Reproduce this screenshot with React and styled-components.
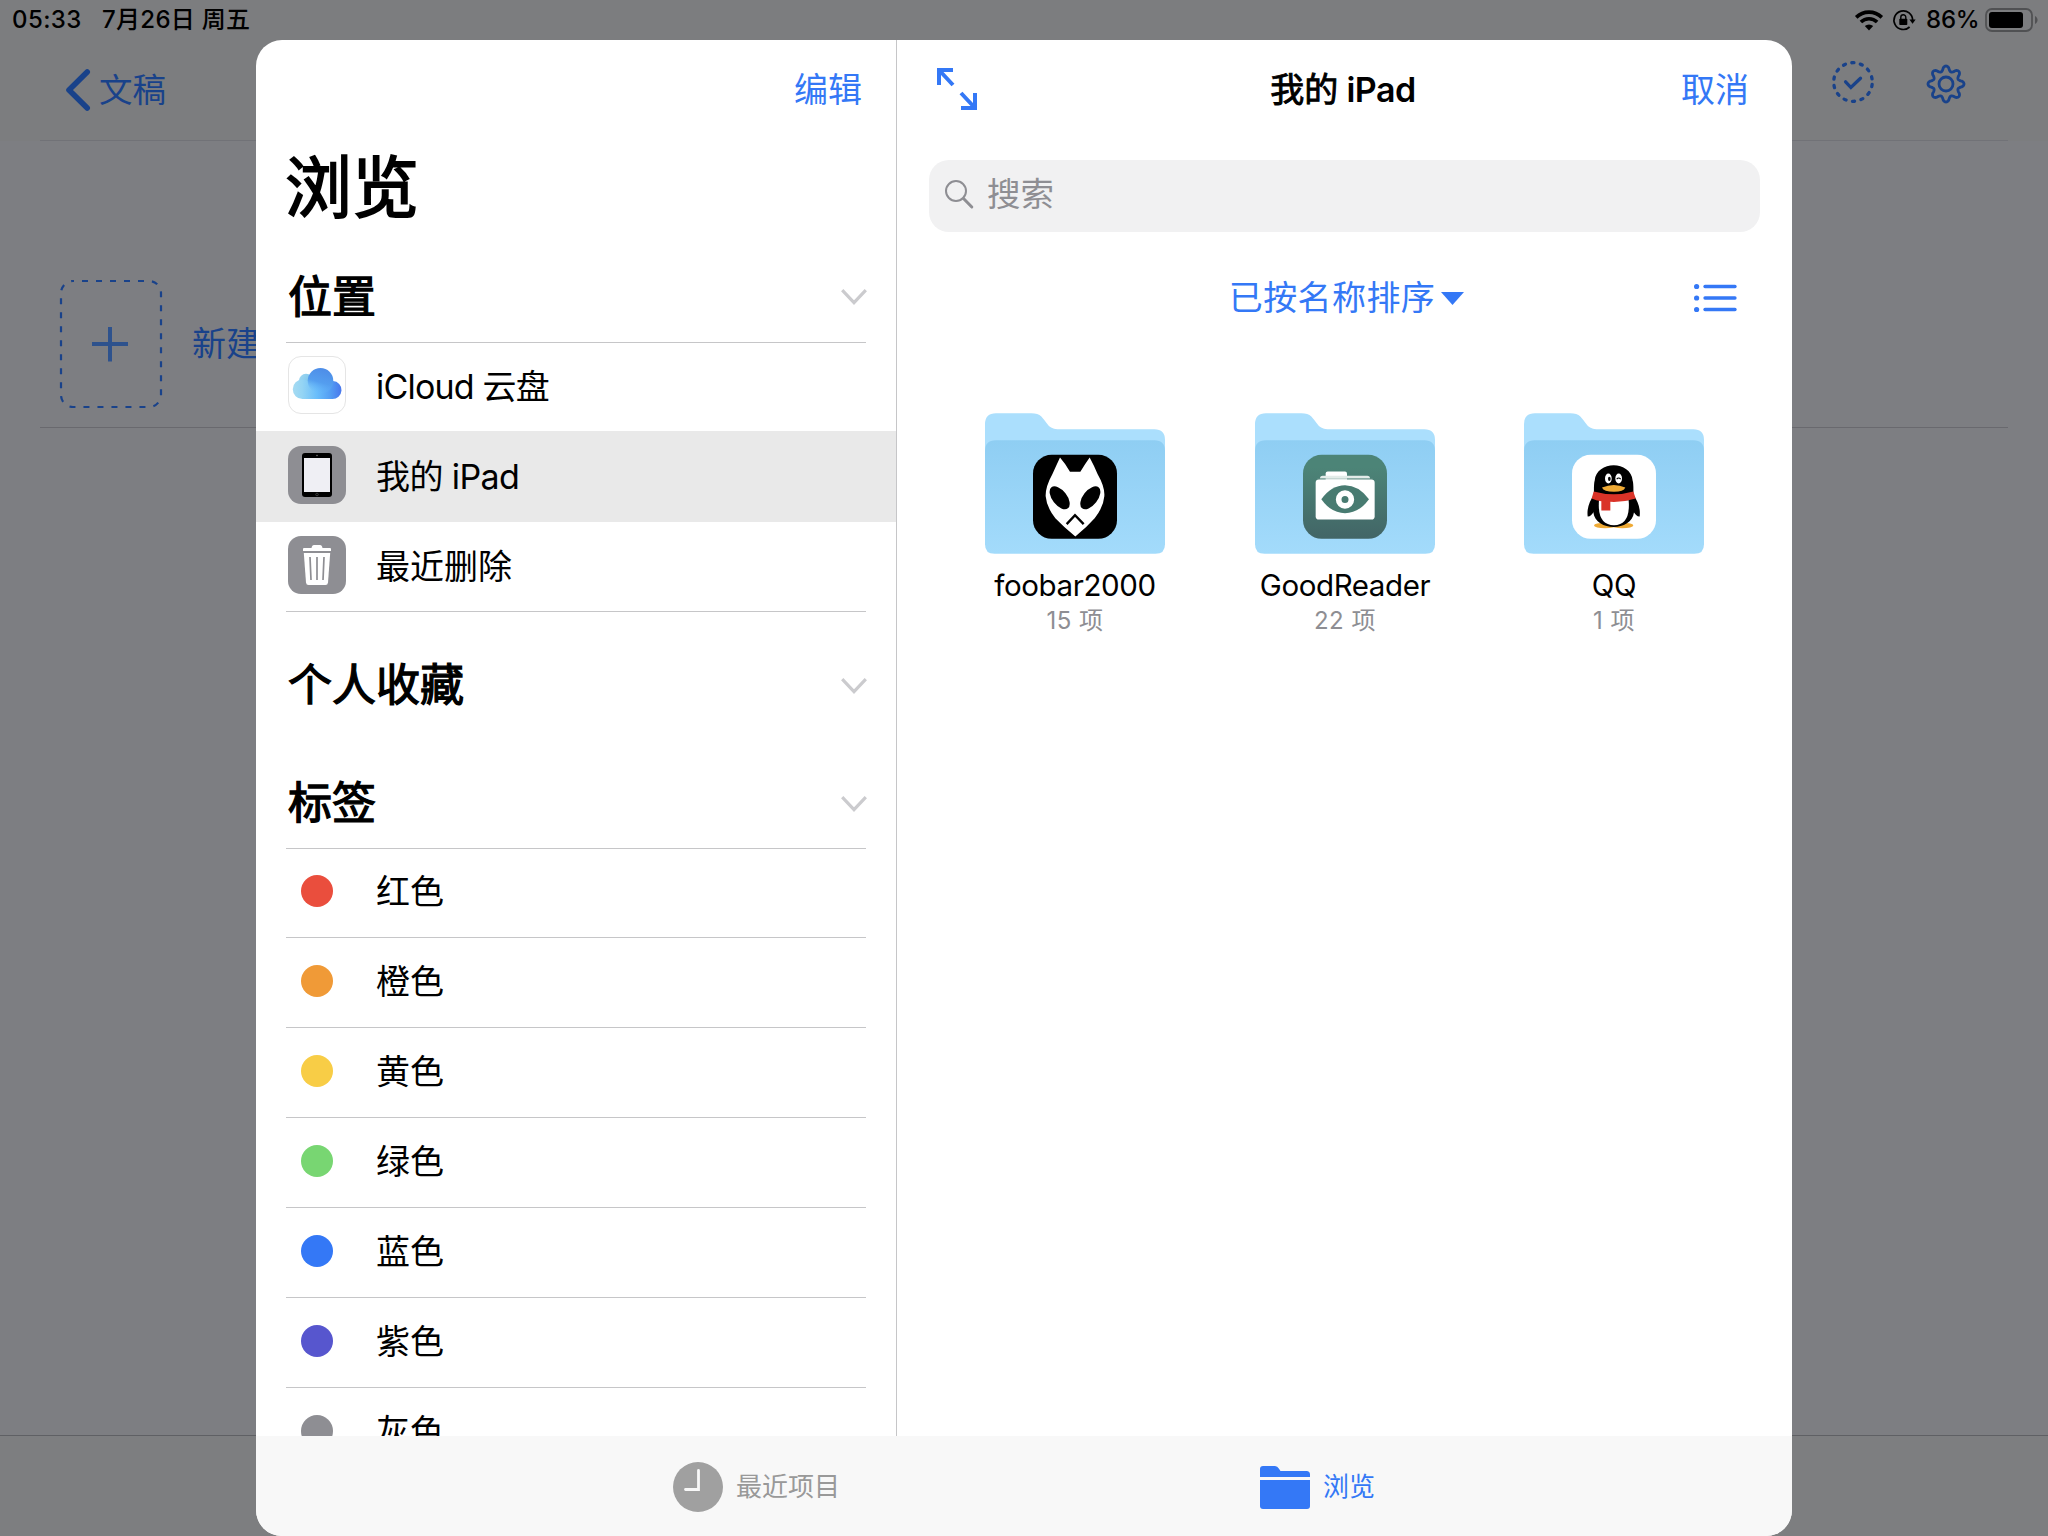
import React from "react";
import styled, { createGlobalStyle } from "styled-components";

const BLUE = "#3478f6";
const DIM_BLUE = "#19428a";
const HAIRLINE = "#c6c6c8";

const GlobalStyle = createGlobalStyle`
  *, *::before, *::after { box-sizing: border-box; }
  body {
    margin: 0;
    overflow: hidden;
    font-family: Inter, "Noto Sans CJK SC", sans-serif;
    color: #000;
  }
  svg { display: block; flex: none; overflow: visible; }
`;

/* ---------- dimmed page behind the sheet ---------- */

const Screen = styled.div`
  position: relative;
  width: 2048px;
  height: 1536px;
  overflow: hidden;
  display: flex;
  flex-direction: column;
  background: #7d7e82;
`;

const StatusBar = styled.header`
  display: flex;
  align-items: center;
  height: 40px;
  padding: 0 10px 0 12px;
  background: #7c7d7f;
  font-size: 24px;
  line-height: 40px;
  font-weight: 500;
  white-space: nowrap;
`;

const Clock = styled.span`
  width: 90px;
  letter-spacing: 0.4px;
`;

const DateText = styled.span`
  flex: 1;
  letter-spacing: 0.3px;
`;

const StatusIcons = styled.div`
  display: flex;
  align-items: center;
`;

const Percent = styled.span`
  width: 69px;
  padding-left: 10px;
  letter-spacing: -0.2px;
`;

const PageNav = styled.nav`
  display: flex;
  align-items: center;
  justify-content: space-between;
  height: 101px;
  padding: 0 40px;
  background: linear-gradient(to right, transparent 40px, #717277 40px, #717277 2008px, transparent 2008px) bottom / 100% 1px no-repeat #7c7d7f;
`;

const BackButton = styled.div`
  display: flex;
  align-items: center;
  gap: 9px;
  padding: 0 0 2px 26px;
  font-size: 33.5px;
  line-height: 50px;
  color: ${DIM_BLUE};
`;

const NavActions = styled.div`
  display: flex;
  align-items: center;
  gap: 52px;
  padding: 0 42px 17px 0;
`;

const NewItem = styled.div`
  display: flex;
  align-items: center;
  gap: 30px;
  margin: 109px 40px 0;
  height: 178px;
  padding: 10px 20px 0;
  border-bottom: 1px solid #69696e;
  font-size: 34px;
  line-height: 50px;
  color: ${DIM_BLUE};
  white-space: nowrap;
`;

const PageFooter = styled.footer`
  margin-top: auto;
  height: 101px;
  border-top: 1px solid #5f6064;
  background: #7d7e80;
`;

/* ---------- sheet ---------- */

const Sheet = styled.main`
  position: absolute;
  left: 256px;
  top: 40px;
  width: 1536px;
  height: 1496px;
  display: flex;
  flex-direction: column;
  border-radius: 26px;
  overflow: hidden;
  background: #fff;
`;

const Panes = styled.div`
  display: flex;
  height: 1396px;
  overflow: hidden;
`;

const Sidebar = styled.aside`
  width: 641px;
  flex: none;
  border-right: 1px solid ${HAIRLINE};
`;

const TextButton = styled.button`
  border: 0;
  padding: 0;
  background: none;
  font: inherit;
  font-size: 34px;
  line-height: 50px;
  color: ${BLUE};
  white-space: nowrap;
`;

const SidebarBar = styled.div`
  display: flex;
  justify-content: flex-end;
  align-items: center;
  height: 100px;
  padding: 0 34px 0 0;
`;

const SidebarTitle = styled.h1`
  margin: 0;
  height: 111px;
  padding: 8px 0 0 29px;
  font-size: 67px;
  line-height: 80px;
  font-weight: 400;
  -webkit-text-stroke: 1.8px #000;
  white-space: nowrap;
`;

const SectionHeader = styled.div`
  display: flex;
  align-items: center;
  justify-content: space-between;
  height: ${(p) => p.$height}px;
  margin: 0 29px 0 30px;
  padding-left: 2px;
`;

const SectionTitle = styled.h2`
  margin: 0;
  font-size: 44px;
  line-height: 60px;
  font-weight: 400;
  -webkit-text-stroke: 1.3px #000;
  white-space: nowrap;
`;

const LocationList = styled.ul`
  list-style: none;
  margin: 0;
  padding: 0;
`;

const LocationRow = styled.li`
  display: flex;
  align-items: center;
  gap: 30px;
  height: ${(p) => p.$height}px;
  padding: 0 32px ${(p) => p.$lift}px;
  background: ${(p) => (p.$selected ? "#e9e9e9" : "transparent")};
`;

const RowLabel = styled.span`
  padding-top: ${(p) => p.$drop}px;
  font-size: 34px;
  line-height: 50px;
  letter-spacing: ${(p) => p.$tracking || 0}px;
  white-space: nowrap;
`;

const Rule = styled.hr`
  margin: 0 30px;
  border: 0;
  height: 1px;
  background: ${HAIRLINE};
`;

const IconTile = styled.span`
  display: grid;
  place-items: center;
  width: 58px;
  height: 58px;
  border-radius: 13px;
  background: ${(p) => (p.$plain ? "#fff" : "#8e8e93")};
  border: ${(p) => (p.$plain ? "1px solid #e5e5e5" : "0")};
`;

const TagRow = styled.div`
  display: flex;
  align-items: center;
  gap: 43px;
  height: ${(p) => (p.$first ? 89 : 90)}px;
  margin: 0 30px;
  padding: 0 15px ${(p) => (p.$first ? 4 : 3)}px;
  border-bottom: 1px solid ${HAIRLINE};
`;

const TagDot = styled.i`
  width: 32px;
  height: 32px;
  border-radius: 50%;
  background: ${(p) => p.$color};
`;

/* ---------- browser pane ---------- */

const Browser = styled.section`
  flex: 1;
  padding: 0 32px;
`;

const BrowserBar = styled.div`
  display: grid;
  grid-template-columns: 1fr auto 1fr;
  align-items: center;
  height: 100px;
  padding: 0 11px 0 8px;
`;

const BrowserTitle = styled.h3`
  margin: 0;
  font-size: 34px;
  line-height: 50px;
  font-weight: 600;
  letter-spacing: -0.5px;
  white-space: nowrap;
`;

const HanPart = styled.span`
  font-weight: 400;
  letter-spacing: 0;
  -webkit-text-stroke: 0.9px #000;
`;

const EndSlot = styled.div`
  display: flex;
  justify-content: flex-end;
`;

const SearchField = styled.div`
  display: flex;
  align-items: center;
  gap: 13px;
  margin-top: 20px;
  height: 72px;
  padding: 0 16px 4px;
  border-radius: 20px;
  background: #f1f1f2;
  color: #8e8e93;
  font-size: 33.5px;
  line-height: 50px;
`;

const SortBar = styled.div`
  display: grid;
  grid-template-columns: 1fr auto 1fr;
  align-items: center;
  height: 132px;
  padding: 0 23px 0 0;
`;

const SortButton = styled(TextButton)`
  display: flex;
  align-items: center;
  gap: 6px;
  letter-spacing: 0.4px;
  margin-left: 27px;
`;

const FolderGrid = styled.div`
  display: grid;
  grid-template-columns: 270px 269px 180px;
  padding: 49px 0 0 56px;
`;

const FolderCard = styled.figure`
  display: flex;
  flex-direction: column;
  align-items: center;
  width: 180px;
  margin: 0;
`;

const FolderName = styled.figcaption`
  margin-top: 11px;
  font-size: 29.5px;
  line-height: 40px;
  letter-spacing: -0.4px;
  white-space: nowrap;
`;

const FolderCount = styled.span`
  margin-top: 1px;
  font-size: 24px;
  line-height: 30px;
  letter-spacing: 0.5px;
  color: #8e8e93;
  white-space: nowrap;
`;

const TabBar = styled.nav`
  display: flex;
  align-items: center;
  height: 100px;
  padding: 2px 0 0 417px;
  background: #f8f8f8;
`;

const Tab = styled.div`
  display: flex;
  flex: none;
  align-items: center;
  gap: 13px;
  width: ${(p) => (p.$active ? "auto" : "587px")};
  font-size: 26px;
  line-height: 40px;
  color: ${(p) => (p.$active ? BLUE : "#999")};
`;

/* ---------- drawings ---------- */

const Wifi = () => (
  <svg width="28" height="21" viewBox="0 0 28 21" fill="none" stroke="#000" strokeWidth="3.6">
    <path d="M1.2 7.4a18.2 18.2 0 0 1 25.6 0" />
    <path d="M5.9 12a11.6 11.6 0 0 1 16.2 0" />
    <path d="M14 20.4l-4.2-4.3a6.2 6.2 0 0 1 8.4 0z" fill="#000" stroke="none" />
  </svg>
);

const LockSvg = styled.svg`
  margin-left: 10px;
`;

const RotationLock = () => (
  <LockSvg width="23" height="21" viewBox="0 0 23 21">
    <path d="M19.6 10.3A9.3 9.3 0 1 0 16.6 17" fill="none" stroke="#000" strokeWidth="1.7" />
    <path d="M16.4 9.5h6.2l-3 4.2z" />
    <rect x="6.3" y="8.8" width="8" height="6.2" rx="0.8" />
    <path d="M7.8 9V7.2a2.5 2.5 0 0 1 5 0V9" fill="none" stroke="#000" strokeWidth="1.4" />
  </LockSvg>
);

const Battery = () => (
  <svg width="53" height="24" viewBox="0 0 53 24">
    <rect x="1" y="1" width="46" height="22" rx="6" fill="none" stroke="#505153" strokeWidth="1.8" />
    <rect x="4" y="4" width="34" height="16" rx="3" />
    <path d="M50 8c3.4 1.4 3.4 6.6 0 8z" fill="#505153" />
  </svg>
);

const BackChevron = () => (
  <svg width="24" height="42" viewBox="0 0 24 42" fill="none" stroke={DIM_BLUE} strokeWidth="5.6" strokeLinecap="round" strokeLinejoin="round">
    <path d="M21.2 3L3 21l18.2 18" />
  </svg>
);

const SelectIcon = () => (
  <svg width="42" height="42" viewBox="0 0 42 42" fill="none" stroke={DIM_BLUE} strokeWidth="3.3" strokeLinecap="round">
    <circle cx="21" cy="21" r="19.3" strokeDasharray="2.2 6.463" strokeDashoffset="-2.5" />
    <path d="M13.6 20.8l5.3 5.7 9.600-9.3" />
  </svg>
);

function gearPath(cx, cy, r, amp, teeth) {
  const pts = [];
  for (let i = 0; i < 240; i += 1) {
    const a = (i / 240) * Math.PI * 2;
    const w = Math.cos(a * teeth);
    const shaped = Math.sign(w) * Math.pow(Math.abs(w), 0.75);
    const rad = r + amp * shaped;
    pts.push(`${(cx + rad * Math.cos(a)).toFixed(2)} ${(cy + rad * Math.sin(a)).toFixed(2)}`);
  }
  return `M${pts.join("L")}Z`;
}

const GearSvg = styled.svg`
  margin-top: 3px;
`;

const GearIcon = () => (
  <GearSvg width="40" height="40" viewBox="0 0 40 40" fill="none" stroke={DIM_BLUE} strokeWidth="2.8" strokeLinejoin="round">
    <path d={gearPath(20, 20, 15.5, 2.5, 8)} />
    <circle cx="20" cy="20" r="7" />
  </GearSvg>
);

const AddTile = () => (
  <svg width="102" height="128" viewBox="0 0 102 128" fill="none">
    <rect x="1" y="1" width="100" height="126" rx="12" stroke={DIM_BLUE} strokeWidth="2.2" strokeDasharray="6 8" strokeDashoffset="5" />
    <path d="M50 47v34.5M32 64h36" stroke="#2e528d" strokeWidth="4" />
  </svg>
);

const ChevronSvg = styled.svg`
  margin-top: 2px;
`;

const Chevron = () => (
  <ChevronSvg width="26" height="17" viewBox="0 0 26 17" fill="none" stroke="#cbcbce" strokeWidth="3.2">
    <path d="M1.2 1.2L13 13.6L24.8 1.2" />
  </ChevronSvg>
);

const CloudSvg = styled.svg`
  margin-top: -3px;
`;

const Cloud = () => (
  <CloudSvg width="48" height="31" viewBox="0 0 48 31">
    <defs>
      <linearGradient id="cloudBase" x1="0" x2="1">
        <stop offset="0" stopColor="#a6dbf2" />
        <stop offset="0.2" stopColor="#94d4f4" />
        <stop offset="0.5" stopColor="#69bdfb" />
        <stop offset="0.78" stopColor="#539cf3" />
        <stop offset="1" stopColor="#4977ec" />
      </linearGradient>
      <linearGradient id="cloudTop" gradientUnits="userSpaceOnUse" x1="32" y1="2" x2="25" y2="25">
        <stop offset="0" stopColor="#4e8ee8" />
        <stop offset="0.55" stopColor="#549eef" />
        <stop offset="1" stopColor="#66b8fa" stopOpacity="0" />
      </linearGradient>
      <linearGradient id="cloudPuff" x1="0" x2="1" y2="0.6">
        <stop offset="0" stopColor="#a2d9f1" />
        <stop offset="1" stopColor="#74c0ea" />
      </linearGradient>
    </defs>
    <circle cx="13" cy="13" r="7.2" fill="url(#cloudPuff)" />
    <path d="M9.5 11.5A9.7 9.7 0 0 0 9.5 31H39a9 9 0 0 0 1-18L27 9l-10 6q-3-3.5-7.5-3.500z" fill="url(#cloudBase)" />
    <circle cx="27.5" cy="12.8" r="12.8" fill="url(#cloudTop)" />
  </CloudSvg>
);

const TabletGlyph = () => (
  <svg width="30" height="44" viewBox="0 0 30 44">
    <rect width="30" height="44" rx="3" />
    <rect x="2" y="5" width="26" height="34" fill="#efeff4" />
    <circle cx="15" cy="2.5" r="0.7" fill="#888" />
    <circle cx="15" cy="41.5" r="1.3" fill="none" stroke="#555" strokeWidth="0.6" />
  </svg>
);

const TrashGlyph = () => (
  <svg width="28" height="40" viewBox="0 0 28 40" fill="#fff">
    <path d="M1 3h7.500q.5-3 2.500-3h6q2 0 2.500 3H27q1 0 1 1v2H0V4q0-1 1-1z" />
    <path d="M.8 8h26.400L25 37.500q-.2 2.500-2.500 2.500h-17Q3.200 40 3 37.500z" />
    <path d="M7 12l1 23M14 12v23M21 12l-1 23" stroke="#8e8e93" strokeWidth="1.7" fill="none" />
  </svg>
);

const ExpandSvg = styled.svg`
  margin-top: -2px;
`;

const ExpandIcon = () => (
  <ExpandSvg width="40" height="42" viewBox="0 0 40 42" fill="none" stroke={BLUE} strokeWidth="4">
    <path d="M2 17V2h14M2 2l14 15" />
    <path d="M38 25v15H24M38 40L24 25" />
  </ExpandSvg>
);

const Magnifier = () => (
  <svg width="29" height="28" viewBox="0 0 29 28" fill="none" stroke="#8e8e93">
    <circle cx="11" cy="11" r="10" strokeWidth="2" />
    <path d="M18.5 18.500l8.300 8.500" strokeWidth="3" strokeLinecap="round" />
  </svg>
);

const ListIcon = () => (
  <svg width="43" height="28" viewBox="0 0 43 28" stroke={BLUE} strokeWidth="3.3" strokeLinecap="round">
    {[2.5, 14, 25.5].map((y) => (
      <g key={y}>
        <circle cx="2.6" cy={y} r="2.6" fill={BLUE} stroke="none" />
        <path d={`M11 ${y}H41`} />
      </g>
    ))}
  </svg>
);

const FoobarLogo = () => (
  <g>
    <rect x="219" y="194" width="252" height="252" rx="56" fill="#000" />
    <path
      d="M300 202Q316 220 330 245H361Q376 220 389 202Q402 226 413 252Q435 290 433 318Q430 352 404 384Q380 411 346 439Q312 411 286 384Q260 352 257 318Q256 290 277 252Q289 226 300 202Z"
      fill="#fff"
    />
    <ellipse cx="299" cy="323" rx="22" ry="40" transform="rotate(-38 299 323)" />
    <ellipse cx="391" cy="323" rx="22" ry="40" transform="rotate(38 391 323)" />
    <path d="M320 402L345 375L371 402" fill="none" stroke="#000" strokeWidth="7" />
  </g>
);

const GoodReaderLogo = () => (
  <g>
    <defs>
      <linearGradient id="readerGreen" x2="0" y2="1">
        <stop offset="0.15" stopColor="#4c8477" />
        <stop offset="1" stopColor="#426566" />
      </linearGradient>
    </defs>
    <rect x="219" y="194" width="252" height="252" rx="56" fill="url(#readerGreen)" />
    <rect x="287" y="244" width="64" height="30" rx="6" fill="#fff" />
    <path d="M270 265q0-8 8-8h134q8 0 8 8z" fill="#e3ece9" />
    <path d="M262 266.5H428" stroke="#6f9b91" strokeWidth="2" />
    <rect x="257" y="268" width="177" height="120" rx="10" fill="#fff" />
    <path d="M274 327Q304 285 345 285T417 327Q386 369 345 369T274 327Z" fill="#487b71" />
    <circle cx="345" cy="328" r="19" fill="none" stroke="#fff" strokeWidth="17" />
  </g>
);

const QQLogo = () => (
  <g>
    <rect x="219" y="194" width="252" height="252" rx="56" fill="#fff" />
    <ellipse cx="318" cy="406" rx="33" ry="8" fill="#efaa35" />
    <ellipse cx="370" cy="406" rx="33" ry="8" fill="#efaa35" />
    <path d="M286 312Q262 345 266 379Q276 380 287 360ZM402 312Q426 345 422 379Q412 380 401 360Z" />
    <path d="M285 318Q284 280 287 272C292 210 396 210 401 272Q404 280 403 318Q410 340 405 366C398 425 290 425 283 366Q278 340 285 318Z" />
    <path d="M300 330H389Q395 405 345 405Q294 405 300 330Z" fill="#fff" />
    <ellipse cx="328" cy="265" rx="10" ry="15" fill="#fff" />
    <ellipse cx="359" cy="265" rx="10" ry="15" fill="#fff" />
    <ellipse cx="331" cy="266" rx="4" ry="6.5" />
    <path d="M353 267q6-7 12 0" fill="none" stroke="#000" strokeWidth="3.5" />
    <path d="M309 292Q345 277 379 292Q374 305 345 305Q314 305 309 292Z" fill="#efaa35" />
    <path d="M284 304Q345 321 403 304L410 325Q372 337 334 335V361H307V333Q291 331 278 325Z" fill="#da3328" />
  </g>
);

const Folder = ({ children }) => (
  <svg width="180" height="141" viewBox="75 68.5 540 423">
    <defs>
      <linearGradient id="folderFront" x2="0" y2="1">
        <stop offset="0" stopColor="#8fcef3" />
        <stop offset="1" stopColor="#a3dbfb" />
      </linearGradient>
    </defs>
    <path
      d="M75 102Q75 69 108 69H214Q234 69 244 79Q252 88 259 98Q271 117 292 117H583Q615 117 615 149V300H75Z"
      fill="#abdffd"
    />
    <path d="M75 182Q75 150 107 150H583Q615 150 615 182V462Q615 491 586 491H104Q75 491 75 462Z" fill="url(#folderFront)" />
    {children}
  </svg>
);

const RecentIcon = () => (
  <svg width="50" height="50" viewBox="0 0 50 50">
    <circle cx="25" cy="25" r="25" fill="#a0a0a0" />
    <path d="M25.5 8.5V27.5H12.5" fill="none" stroke="#f8f8f8" strokeWidth="2.8" strokeLinecap="round" />
  </svg>
);

const BrowseIcon = () => (
  <svg width="50" height="43" viewBox="0 0 50 43" fill={BLUE}>
    <path d="M0 11V3Q0 0 3 0H15Q17.5 0 18.8 2.500L20.5 5H46.500Q50 5 50 8.500V11Z" />
    <path d="M0 14H50V40Q50 43 47 43H3Q0 43 0 40Z" />
  </svg>
);

/* ---------- data ---------- */

const LOCATIONS = [
  { name: "iCloud 云盘", glyph: <Cloud />, height: 88, lift: 4, plain: true, tracking: -0.8 },
  { name: "我的 iPad", glyph: <TabletGlyph />, height: 91, lift: 3, selected: true, tracking: -0.6 },
  { name: "最近删除", glyph: <TrashGlyph />, height: 89, lift: 3 },
];

const TAGS = [
  ["红色", "#ea4e3d"],
  ["橙色", "#f09a37"],
  ["黄色", "#f8cd46"],
  ["绿色", "#78d672"],
  ["蓝色", "#3478f6"],
  ["紫色", "#5756ce"],
  ["灰色", "#8e8e93"],
];

const FOLDERS = [
  { name: "foobar2000", count: "15 项", logo: <FoobarLogo /> },
  { name: "GoodReader", count: "22 项", logo: <GoodReaderLogo /> },
  { name: "QQ", count: "1 项", logo: <QQLogo /> },
];

export default function App() {
  return (
    <>
      <GlobalStyle />
      <Screen>
        <StatusBar>
          <Clock>05:33</Clock>
          <DateText>7月26日 周五</DateText>
          <StatusIcons>
            <Wifi />
            <RotationLock />
            <Percent>86%</Percent>
            <Battery />
          </StatusIcons>
        </StatusBar>
        <PageNav>
          <BackButton>
            <BackChevron />
            文稿
          </BackButton>
          <NavActions>
            <SelectIcon />
            <GearIcon />
          </NavActions>
        </PageNav>
        <NewItem>
          <AddTile />
          新建
        </NewItem>
        <PageFooter />

        <Sheet>
          <Panes>
            <Sidebar>
              <SidebarBar>
                <TextButton>编辑</TextButton>
              </SidebarBar>
              <SidebarTitle>浏览</SidebarTitle>
              <SectionHeader $height={91}>
                <SectionTitle>位置</SectionTitle>
                <Chevron />
              </SectionHeader>
              <Rule />
              <LocationList>
                {LOCATIONS.map((l) => (
                  <LocationRow key={l.name} $height={l.height} $lift={l.lift} $selected={l.selected}>
                    <IconTile $plain={l.plain}>{l.glyph}</IconTile>
                    <RowLabel $drop={3} $tracking={l.tracking}>{l.name}</RowLabel>
                  </LocationRow>
                ))}
              </LocationList>
              <Rule />
              <SectionHeader $height={146}>
                <SectionTitle>个人收藏</SectionTitle>
                <Chevron />
              </SectionHeader>
              <SectionHeader $height={90}>
                <SectionTitle>标签</SectionTitle>
                <Chevron />
              </SectionHeader>
              <Rule />
              {TAGS.map(([name, color], i) => (
                <TagRow key={name} $first={i === 0}>
                  <TagDot $color={color} />
                  <RowLabel $drop={2}>{name}</RowLabel>
                </TagRow>
              ))}
            </Sidebar>

            <Browser>
              <BrowserBar>
                <ExpandIcon />
                <BrowserTitle>
                  <HanPart>我的</HanPart> iPad
                </BrowserTitle>
                <EndSlot>
                  <TextButton>取消</TextButton>
                </EndSlot>
              </BrowserBar>
              <SearchField>
                <Magnifier />
                <span>搜索</span>
              </SearchField>
              <SortBar>
                <span />
                <SortButton>
                  已按名称排序
                  <svg width="23" height="13" viewBox="0 0 23 13" fill={BLUE}>
                    <path d="M0 0H23L11.5 13Z" />
                  </svg>
                </SortButton>
                <EndSlot>
                  <ListIcon />
                </EndSlot>
              </SortBar>
              <FolderGrid>
                {FOLDERS.map((f) => (
                  <FolderCard key={f.name}>
                    <Folder>{f.logo}</Folder>
                    <FolderName>{f.name}</FolderName>
                    <FolderCount>{f.count}</FolderCount>
                  </FolderCard>
                ))}
              </FolderGrid>
            </Browser>
          </Panes>
          <TabBar>
            <Tab>
              <RecentIcon />
              最近项目
            </Tab>
            <Tab $active>
              <BrowseIcon />
              浏览
            </Tab>
          </TabBar>
        </Sheet>
      </Screen>
    </>
  );
}
